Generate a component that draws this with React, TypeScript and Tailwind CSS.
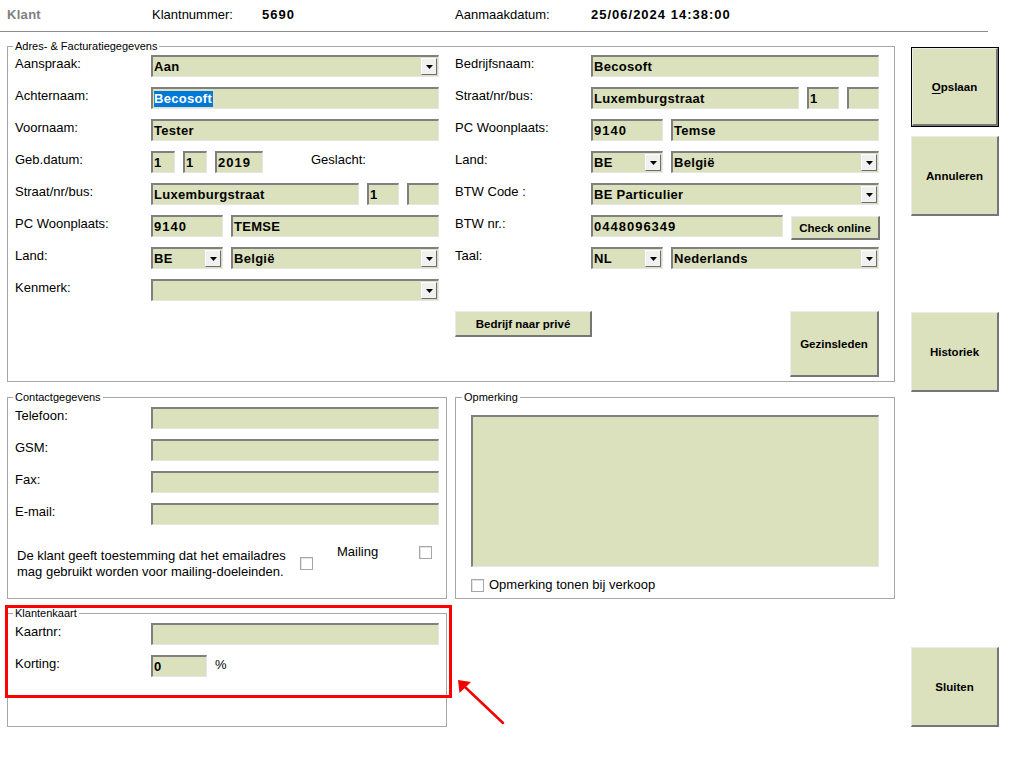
import React from "react";

// Sunken edit-box frame, in the style of a classic Windows form
const frame =
  "shrink-0 bg-[#dbe1bc] border-t-2 border-l-2 border-b border-r border-t-[#808080] border-l-[#808080] border-b-[#e6e6e6] border-r-[#e6e6e6] flex items-center";

// Raised push button frame
const raised =
  "shrink-0 bg-[#dbe1bc] border-t border-l border-b-2 border-r-2 border-t-[#ececec] border-l-[#ececec] border-b-[#767676] border-r-[#767676] flex items-center justify-center font-bold text-[11.5px] leading-[14px]";

function TextBox({
  w,
  value,
  num,
  selected,
}: {
  w: string;
  value?: string;
  num?: boolean;
  selected?: boolean;
}) {
  return (
    <div className={`${frame} h-[22px] ${w}`}>
      {value ? (
        <span
          className={`pl-[1px] font-bold whitespace-nowrap ${
            num ? "tracking-[1px]" : "tracking-[0.3px]"
          }`}
        >
          {selected ? (
            <span className="bg-[#0078d7] text-white leading-[16px] inline-block pr-[1px]">
              {value}
            </span>
          ) : (
            <span className="leading-[19px]">{value}</span>
          )}
        </span>
      ) : null}
    </div>
  );
}

function ComboBox({ w, value }: { w: string; value?: string }) {
  return (
    <div className={`${frame} h-[22px] ${w}`}>
      <span className="pl-[1px] font-bold tracking-[0.3px] leading-[19px] whitespace-nowrap">
        {value}
      </span>
      <div className="ml-auto mr-[1px] w-[16px] h-[17px] bg-[#f0f0f0] border-t border-l border-b border-r border-t-[#ffffff] border-l-[#ffffff] border-b-[#6d6d6d] border-r-[#6d6d6d] flex items-center justify-center">
        <svg width="7" height="4" viewBox="0 0 7 4">
          <path d="M0 0 H7 L3.5 4 Z" fill="#000" />
        </svg>
      </div>
    </div>
  );
}

// Label column: 128px plus the row gap puts every field at the same x
function Label({ children }: { children: React.ReactNode }) {
  return <span className="w-[128px] shrink-0 pt-[1px] leading-[16px] whitespace-nowrap">{children}</span>;
}

function Row({ children }: { children: React.ReactNode }) {
  return <div className="flex h-[22px] items-start gap-[8px]">{children}</div>;
}

function CheckBox({ className = "" }: { className?: string }) {
  return (
    <div
      className={`w-[13px] h-[13px] shrink-0 border border-[#a6a6a6] bg-white shadow-[inset_1px_1px_0_#e4e4e4] ${className}`}
    />
  );
}

function Legend({ children }: { children: React.ReactNode }) {
  return <legend className="ml-[-2px] px-[2px] text-[11px] leading-[14px]">{children}</legend>;
}

export default function App() {
  return (
    <div className="relative w-[1036px] h-[783px] bg-white text-black text-[13px] font-['Liberation_Sans',Arial,sans-serif] overflow-hidden">
      {/* Title bar of the customer form */}
      <div className="w-[988px] h-[32px] border-b border-[#8c8c8c] flex items-center pb-[1px] whitespace-nowrap">
        <span className="w-[152px] shrink-0 pl-[7px] font-bold text-[#808080] tracking-[0.3px]">Klant</span>
        <span className="w-[110px] shrink-0">Klantnummer:</span>
        <span className="w-[193px] shrink-0 font-bold tracking-[1px]">5690</span>
        <span className="w-[136px] shrink-0">Aanmaakdatum:</span>
        <span className="font-bold tracking-[1px]">25/06/2024 14:38:00</span>
      </div>

      <div className="flex pl-[7px]">
        <div className="w-[888px] shrink-0 flex flex-col pt-[7px]">
          {/* Address & billing */}
          <fieldset className="border border-[#a6a6a6] h-[343px] pl-[7px] pr-[14px] pt-[2px] pb-[5px]">
            <Legend>Adres- &amp; Facturatiegegevens</Legend>
            <div className="flex gap-[16px]">
              <div className="w-[424px] flex flex-col gap-[10px]">
                <Row>
                  <Label>Aanspraak:</Label>
                  <ComboBox w="w-[288px]" value="Aan" />
                </Row>
                <Row>
                  <Label>Achternaam:</Label>
                  <TextBox w="w-[288px]" value="Becosoft" selected />
                </Row>
                <Row>
                  <Label>Voornaam:</Label>
                  <TextBox w="w-[288px]" value="Tester" />
                </Row>
                <Row>
                  <Label>Geb.datum:</Label>
                  <TextBox w="w-[24px]" value="1" />
                  <TextBox w="w-[24px]" value="1" />
                  <TextBox w="w-[48px]" value="2019" num />
                  <span className="ml-[40px] pt-[1px] leading-[16px]">Geslacht:</span>
                </Row>
                <Row>
                  <Label>Straat/nr/bus:</Label>
                  <TextBox w="w-[208px]" value="Luxemburgstraat" />
                  <TextBox w="w-[32px]" value="1" />
                  <TextBox w="w-[32px]" />
                </Row>
                <Row>
                  <Label>PC Woonplaats:</Label>
                  <TextBox w="w-[72px]" value="9140" num />
                  <TextBox w="w-[208px]" value="TEMSE" />
                </Row>
                <Row>
                  <Label>Land:</Label>
                  <ComboBox w="w-[72px]" value="BE" />
                  <ComboBox w="w-[208px]" value="België" />
                </Row>
                <Row>
                  <Label>Kenmerk:</Label>
                  <ComboBox w="w-[288px]" />
                </Row>
              </div>

              <div className="w-[424px] flex flex-col">
                <div className="flex flex-col gap-[10px]">
                  <Row>
                    <Label>Bedrijfsnaam:</Label>
                    <TextBox w="w-[288px]" value="Becosoft" />
                  </Row>
                  <Row>
                    <Label>Straat/nr/bus:</Label>
                    <TextBox w="w-[208px]" value="Luxemburgstraat" />
                    <TextBox w="w-[32px]" value="1" />
                    <TextBox w="w-[32px]" />
                  </Row>
                  <Row>
                    <Label>PC Woonplaats:</Label>
                    <TextBox w="w-[72px]" value="9140" num />
                    <TextBox w="w-[208px]" value="Temse" />
                  </Row>
                  <Row>
                    <Label>Land:</Label>
                    <ComboBox w="w-[72px]" value="BE" />
                    <ComboBox w="w-[208px]" value="België" />
                  </Row>
                  <Row>
                    <Label>BTW Code :</Label>
                    <ComboBox w="w-[288px]" value="BE Particulier" />
                  </Row>
                  <Row>
                    <Label>BTW nr.:</Label>
                    <TextBox w="w-[192px]" value="0448096349" num />
                    <div className={`${raised} w-[89px] h-[24px] mt-[1px]`}>Check online</div>
                  </Row>
                  <Row>
                    <Label>Taal:</Label>
                    <ComboBox w="w-[72px]" value="NL" />
                    <ComboBox w="w-[208px]" value="Nederlands" />
                  </Row>
                </div>
                <div className="mt-[42px] flex justify-between items-start">
                  <div className={`${raised} w-[137px] h-[26px]`}>Bedrijf naar privé</div>
                  <div className={`${raised} w-[89px] h-[66px]`}>Gezinsleden</div>
                </div>
              </div>
            </div>
          </fieldset>

          <div className="mt-[8px] flex gap-[8px]">
            {/* Contact details */}
            <fieldset className="w-[440px] h-[209px] border border-[#a6a6a6] pl-[7px] pt-[3px]">
              <Legend>Contactgegevens</Legend>
              <div className="flex flex-col gap-[10px]">
                <Row>
                  <Label>Telefoon:</Label>
                  <TextBox w="w-[288px]" />
                </Row>
                <Row>
                  <Label>GSM:</Label>
                  <TextBox w="w-[288px]" />
                </Row>
                <Row>
                  <Label>Fax:</Label>
                  <TextBox w="w-[288px]" />
                </Row>
                <Row>
                  <Label>E-mail:</Label>
                  <TextBox w="w-[288px]" />
                </Row>
              </div>
              <div className="mt-[19px] flex items-start">
                <div className="w-[285px] shrink-0 pl-[2px] pt-[4px] leading-[16px] whitespace-nowrap">
                  De klant geeft toestemming dat het emailadres
                  <br />
                  mag gebruikt worden voor mailing-doeleinden.
                </div>
                <CheckBox className="mt-[13px]" />
                <span className="ml-[24px] w-[82px] shrink-0 leading-[16px]">Mailing</span>
                <CheckBox className="mt-[2px]" />
              </div>
            </fieldset>

            {/* Remarks */}
            <fieldset className="w-[440px] h-[209px] border border-[#a6a6a6] pl-[8px]">
              <Legend>Opmerking</Legend>
              <div className="ml-[7px] mt-[11px] flex flex-col">
                <div className={`${frame} w-[408px] h-[152px]`} />
                <div className="mt-[10px] flex items-center">
                  <CheckBox />
                  <span className="ml-[5px] leading-[16px]">Opmerking tonen bij verkoop</span>
                </div>
              </div>
            </fieldset>
          </div>

          {/* Customer card */}
          <fieldset className="mt-[7px] w-[440px] h-[121px] border border-[#a6a6a6] pl-[7px] pt-[3px]">
            <Legend>Klantenkaart</Legend>
            <div className="flex flex-col gap-[10px]">
              <Row>
                <Label>Kaartnr:</Label>
                <TextBox w="w-[288px]" />
              </Row>
              <Row>
                <Label>Korting:</Label>
                <TextBox w="w-[56px]" value="0" num />
                <span className="pt-[2px] leading-[16px]">%</span>
              </Row>
            </div>
          </fieldset>
        </div>

        {/* Action buttons */}
        <div className="ml-[16px] w-[88px] shrink-0 flex flex-col">
          <div className="mt-[15px] h-[80px] border border-black flex">
            <div className={`${raised} flex-1`}>
              <span>
                <span className="underline underline-offset-2">O</span>pslaan
              </span>
            </div>
          </div>
          <div className={`${raised} mt-[9px] h-[80px]`}>Annuleren</div>
          <div className={`${raised} mt-[96px] h-[80px]`}>Historiek</div>
          <div className={`${raised} mt-[255px] h-[80px]`}>Sluiten</div>
        </div>
      </div>

      {/* Highlight frame and pointer around the card section */}
      <div className="absolute left-[5px] top-[605px] w-[447px] h-[93px] border-[3px] border-[#ff0000]" />
      <svg className="absolute left-[450px] top-[670px]" width="60" height="60" viewBox="0 0 60 60">
        <line x1="53" y1="53" x2="15" y2="17" stroke="#f00000" strokeWidth="2.5" strokeLinecap="round" />
        <path d="M8 10 L9.5 23 L21 12 Z" fill="#f00000" />
      </svg>
    </div>
  );
}
